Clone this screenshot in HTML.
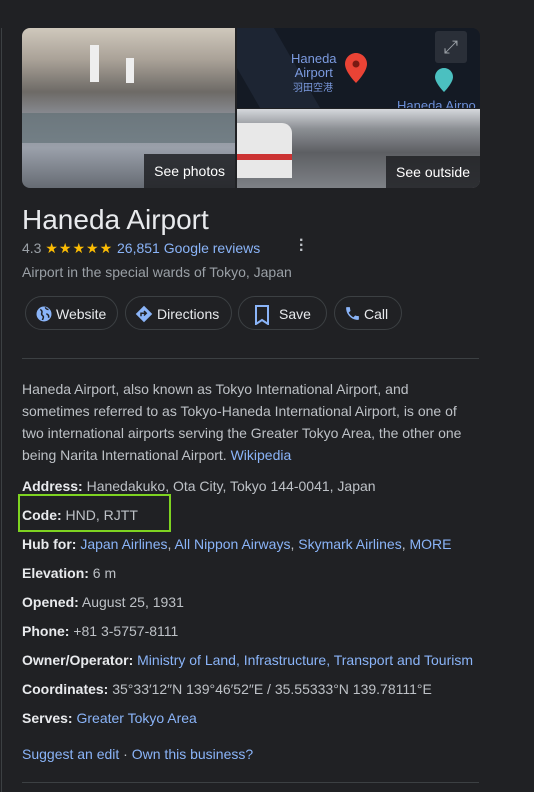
<!DOCTYPE html>
<html><head><meta charset="utf-8"><style>
body{margin:0;background:#202124;width:534px;height:792px;overflow:hidden;font-family:"Liberation Sans",Arial,sans-serif;color:#bdc1c6;position:relative}
.vl{position:absolute;left:1px;top:28px;width:1px;height:764px;background:#3c4043}
.ph{position:absolute;overflow:hidden}
a{color:#8ab4f8;text-decoration:none}
.lbl{position:absolute;background:rgba(32,33,36,.85);color:#fff;font-size:14px;padding:0 10px;height:32px;line-height:32px}
.row{position:absolute;left:22px;font-size:14px;color:#bdc1c6;white-space:nowrap}
.row b{color:#e8eaed}
.btn{position:absolute;top:296px;height:34px;border:1px solid #3c4043;border-radius:18px;font-size:14px;color:#e8eaed;line-height:34px;box-sizing:border-box}
.btn svg{position:absolute;left:9px;top:8px}
</style></head><body>
<div class="vl"></div>
<div class="ph" style="left:22px;top:28px;width:213px;height:160px;border-radius:8px 0 0 8px;background:linear-gradient(180deg,#cfc8bc 0%,#a9a197 20%,#6d6a66 40%,#8a8d95 55%,#9aa0aa 75%,#666b73 100%)">
 <div style="position:absolute;left:68px;top:17px;width:9px;height:37px;background:#eee"></div>
 <div style="position:absolute;left:104px;top:30px;width:8px;height:25px;background:#eee"></div>
 <div style="position:absolute;left:0;top:85px;width:213px;height:30px;background:#5a6a70;opacity:.6"></div>
 <div class="lbl" style="right:0;bottom:0;height:34px;line-height:34px">See photos</div>
</div>
<div class="ph" style="left:237px;top:28px;width:243px;height:80px;border-radius:0 8px 0 0;background:#141a24">
 <div style="position:absolute;left:0;top:0;width:60px;height:80px;background:#1d2533;transform:skewX(30deg)"></div>
 <div style="position:absolute;left:54px;top:24px;color:#7c9be0;font-size:13px;line-height:14px;text-align:center">Haneda<br>Airport</div>
 <div style="position:absolute;left:56px;top:51px;color:#7c9be0;font-size:10px;font-family:'Noto Sans CJK JP',sans-serif">羽田空港</div>
 <svg style="position:absolute;left:108px;top:25px" width="22" height="30" viewBox="0 0 22 30"><path d="M11 0C5 0 0 5 0 11c0 8 11 19 11 19s11-11 11-19C22 5 17 0 11 0z" fill="#ea4335"/><circle cx="11" cy="11" r="3.5" fill="#7a1a12"/></svg>
 <svg style="position:absolute;left:198px;top:40px" width="18" height="24" viewBox="0 0 18 24"><path d="M9 0C4 0 0 4 0 9c0 6 9 15 9 15s9-9 9-15C18 4 14 0 9 0z" fill="#4bc0c0"/></svg>
 <div style="position:absolute;left:198px;top:3px;width:32px;height:32px;background:#2a2f38;border-radius:3px;color:#9aa0a6;font-size:18px;text-align:center;line-height:32px">⤢</div>
 <div style="position:absolute;left:160px;top:70px;color:#6c8fd8;font-size:13px">Haneda Airpo</div>
</div>
<div class="ph" style="left:237px;top:109px;width:243px;height:79px;border-radius:0 0 8px 0;background:linear-gradient(180deg,#d5d8dc 0%,#8c8f94 25%,#5d5f63 55%,#7e8186 100%)">
 <div style="position:absolute;left:0;top:14px;width:55px;height:55px;background:#e8e8e8;border-radius:0 10px 0 0"></div>
 <div style="position:absolute;left:0;top:45px;width:55px;height:6px;background:#c33"></div>
 <div class="lbl" style="right:0;bottom:0;height:32px">See outside</div>
</div>
<div style="position:absolute;left:22px;top:204px;font-size:28px;color:#e8eaed">Haneda Airport</div>
<div style="position:absolute;left:22px;top:240px;font-size:14px;color:#9aa0a6;white-space:nowrap">4.3 <span style="color:#fbbc04;letter-spacing:1px;font-size:14px">★★★★★</span> <a>26,851 Google reviews</a></div>
<div style="position:absolute;left:299px;top:238px;color:#bdc1c6;font-size:16px;font-weight:bold;line-height:5px">·<br>·<br>·</div>
<div style="position:absolute;left:22px;top:264px;font-size:14px;color:#9aa0a6">Airport in the special wards of Tokyo, Japan</div>
<div class="btn" style="left:25px;width:93px;padding-left:30px"><svg width="18" height="18" viewBox="0 0 24 24"><circle cx="12" cy="12" r="10" fill="#8ab4f8"/><path d="M7 6c2 1 3 3 2 5s1 3 2 4-1 4-1 5M14 3c0 2 2 3 4 3M15 12c2 0 4 2 3 5" stroke="#202124" stroke-width="2" fill="none"/></svg>Website</div>
<div class="btn" style="left:125px;width:107px;padding-left:31px"><svg width="18" height="18" viewBox="0 0 24 24"><path d="M12 1l11 11-11 11L1 12z" fill="#8ab4f8"/><path d="M8 15v-4h6M12 8l3 3-3 3" stroke="#202124" stroke-width="2" fill="none"/></svg>Directions</div>
<div class="btn" style="left:238px;width:89px;padding-left:40px"><svg style="left:14px" width="18" height="20" viewBox="0 0 18 20"><path d="M3 1h12v18l-6-4-6 4z" stroke="#8ab4f8" stroke-width="2" fill="none"/></svg>Save</div>
<div class="btn" style="left:334px;width:68px;padding-left:29px"><svg width="17" height="17" viewBox="0 0 24 24"><path d="M6.6 10.8c1.4 2.8 3.8 5.1 6.6 6.6l2.2-2.2c.3-.3.7-.4 1-.2 1.1.4 2.3.6 3.6.6.6 0 1 .4 1 1V20c0 .6-.4 1-1 1C10.6 21 3 13.4 3 4c0-.6.4-1 1-1h3.5c.6 0 1 .4 1 1 0 1.3.2 2.5.6 3.6.1.3 0 .7-.2 1z" fill="#8ab4f8"/></svg>Call</div>
<div style="position:absolute;left:22px;top:358px;width:457px;height:1px;background:#3c4043"></div>
<div style="position:absolute;left:22px;top:378px;width:446px;font-size:14px;line-height:22px;color:#bdc1c6">Haneda Airport, also known as Tokyo International Airport, and sometimes referred to as Tokyo-Haneda International Airport, is one of two international airports serving the Greater Tokyo Area, the other one being Narita International Airport. <a>Wikipedia</a></div>
<div class="row" style="top:478px"><b>Address:</b> Hanedakuko, Ota City, Tokyo 144-0041, Japan</div>
<div style="position:absolute;left:18px;top:494px;width:153px;height:38px;border:2px solid #7ed321;box-sizing:border-box"></div>
<div class="row" style="top:507px"><b>Code:</b> HND, RJTT</div>
<div class="row" style="top:536px"><b>Hub for:</b> <a>Japan Airlines</a>, <a>All Nippon Airways</a>, <a>Skymark Airlines</a>, <a>MORE</a></div>
<div class="row" style="top:565px"><b>Elevation:</b> 6 m</div>
<div class="row" style="top:594px"><b>Opened:</b> August 25, 1931</div>
<div class="row" style="top:623px"><b>Phone:</b> +81 3-5757-8111</div>
<div class="row" style="top:652px"><b>Owner/Operator:</b> <a>Ministry of Land, Infrastructure, Transport and Tourism</a></div>
<div class="row" style="top:681px"><b>Coordinates:</b> 35°33′12″N 139°46′52″E / 35.55333°N 139.78111°E</div>
<div class="row" style="top:710px"><b>Serves:</b> <a>Greater Tokyo Area</a></div>
<div class="row" style="top:746px"><a>Suggest an edit</a> · <a>Own this business?</a></div>
<div style="position:absolute;left:22px;top:782px;width:457px;height:1px;background:#3c4043"></div>
</body></html>
